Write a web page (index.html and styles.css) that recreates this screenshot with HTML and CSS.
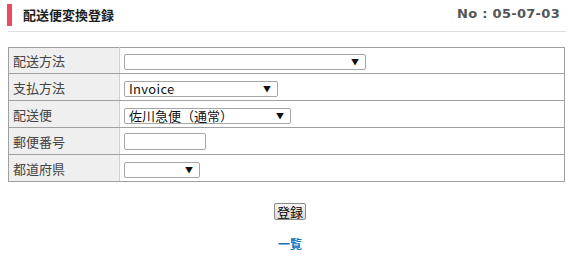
FILE: index.html
```html
<!DOCTYPE html>
<html lang="ja">
<head>
<meta charset="utf-8">
<title>配送便変換登録</title>
<link rel="stylesheet" href="styles.css">
</head>
<body>
<div class="page">
  <div class="header">
    <h1 class="title">配送便変換登録</h1>
    <div class="doc-no">No : 05-07-03</div>
  </div>
  <table class="form">
    <tr>
      <th>配送方法</th>
      <td><span class="sel w1"><select><option></option></select><span class="arrow">▼</span></span></td>
    </tr>
    <tr>
      <th>支払方法</th>
      <td><span class="sel w2"><select><option>Invoice</option></select><span class="arrow">▼</span></span></td>
    </tr>
    <tr>
      <th>配送便</th>
      <td><span class="sel w3"><select><option>佐川急便（通常）</option></select><span class="arrow">▼</span></span></td>
    </tr>
    <tr>
      <th>郵便番号</th>
      <td><input class="txt" type="text"></td>
    </tr>
    <tr>
      <th>都道府県</th>
      <td><span class="sel w4"><select><option></option></select><span class="arrow">▼</span></span></td>
    </tr>
  </table>
  <div class="actions">
    <button class="btn" type="button">登録</button>
    <a class="list-link" href="#">一覧</a>
  </div>
</div>
</body>
</html>
```
FILE: styles.css
```css
html, body {
  margin: 0;
  padding: 0;
  background: #fff;
}
body {
  font-family: "Noto Sans CJK JP", "DejaVu Sans", sans-serif;
  color: #333;
}
.page {
  padding: 4px 9px 0 8px;
}
.header {
  display: flex;
  justify-content: space-between;
  align-items: center;
  height: 22px;
  padding-bottom: 5px;
  border-bottom: 1px solid #dedede;
}
.title {
  margin: 0 0 0 -1px;
  height: 22px;
  border-left: 5px solid #ea4b61;
  padding-left: 11px;
  font-size: 13px;
  font-weight: bold;
  line-height: 22px;
  color: #1e1e1e;
}
.doc-no {
  font-family: "DejaVu Sans", "Liberation Sans", sans-serif;
  font-size: 13px;
  font-weight: bold;
  color: #555;
  letter-spacing: 0.3px;
  margin-right: 6px;
  margin-top: -4px;
}
.form {
  margin-top: 15px;
  width: 557px;
  border-collapse: collapse;
  font-size: 13px;
}
.form th,
.form td {
  border: 1px solid #a0a0a0;
  height: 26px;
  padding: 0 0 0 4px;
  box-sizing: border-box;
}
.form th {
  width: 111px;
  background: #efefef;
  text-align: left;
  font-weight: normal;
  color: #444;
  border-right-color: #cfcfcf;
}
.form tr + tr th,
.form tr + tr td {
  height: 27px;
}
.sel {
  position: relative;
  display: inline-block;
  vertical-align: middle;
}
.sel select {
  appearance: none;
  -webkit-appearance: none;
  display: block;
  width: 100%;
  height: 16px;
  margin: 0;
  padding: 0 0 0 4px;
  border: 1px solid #a6a6a6;
  border-radius: 2px;
  background: #fff;
  font-family: "Noto Sans CJK JP", "DejaVu Sans", sans-serif;
  font-size: 13px;
  line-height: 14px;
  color: #111;
  box-sizing: border-box;
}
.sel .arrow {
  position: absolute;
  right: 7px;
  top: 3px;
  font-size: 8px;
  line-height: 10px;
  color: #111;
  pointer-events: none;
}
.w1 { width: 242px; }
.w2 { width: 154px; }
.w3 { width: 167px; }
.w4 { width: 76px; }
.w2 select { letter-spacing: 0.3px; }
.txt {
  display: block;
  width: 82px;
  height: 17px;
  margin: 0;
  padding: 0;
  border: 1px solid #a6a6a6;
  border-radius: 2px;
  box-sizing: border-box;
}
.actions {
  display: flex;
  flex-direction: column;
  align-items: center;
  padding-left: 6px;
  margin-top: 21px;
}
.btn {
  height: 17px;
  padding: 0 2px;
  border: 1px solid #8a8a8a;
  border-radius: 2px;
  background: linear-gradient(#f4f4f4, #dcdcdc);
  font-family: "Noto Sans CJK JP", sans-serif;
  font-size: 13px;
  line-height: 14px;
  color: #000;
}
.list-link {
  margin-top: 15px;
  font-size: 12px;
  font-weight: bold;
  color: #0b74bd;
  text-decoration: none;
}
```
